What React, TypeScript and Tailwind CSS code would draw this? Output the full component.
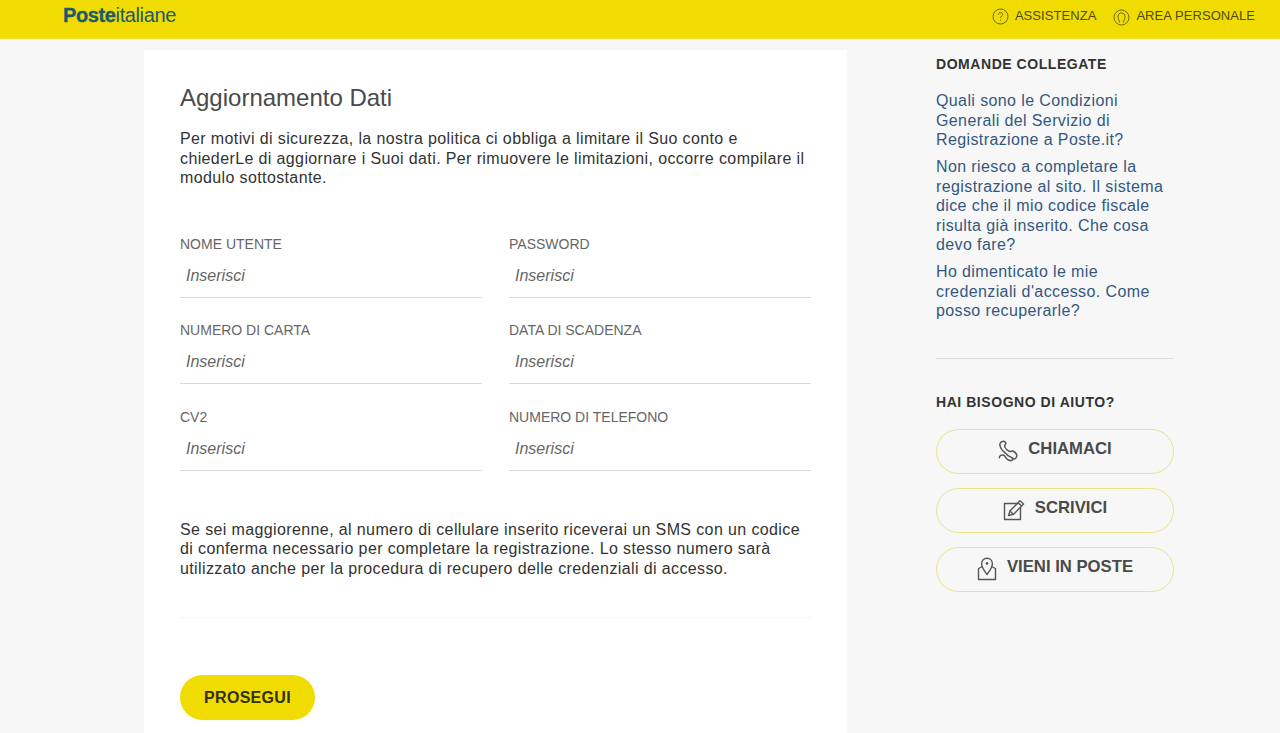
const FONT = "font-['Liberation_Sans',Arial,sans-serif]";

function Field({ label }: { label: string }) {
  return (
    <div className="h-[86.5px]">
      <div className="h-[18px] text-[14px] leading-[18px] text-[#666]">{label}</div>
      <div className="h-[45px] border-b border-[#d9d9d9] pl-[6px] pt-[13px] text-[16px] leading-[20px] italic text-[#666]">
        Inserisci
      </div>
    </div>
  );
}

// handset with a curled cord at the bottom left
function PhoneIcon() {
  return (
    <svg width="20" height="22" viewBox="0 0 20 22" fill="none" stroke="#555" strokeWidth="1.5" strokeLinejoin="round" strokeLinecap="round">
      <path d="M2 3.5 C3 1.5 5.5 0.8 6.8 1.6 L7.8 3 C8 4.2 6.5 5 6.6 6.2 C7 8 9.5 10.6 11.5 11.4 C12.8 11.8 13.6 10.6 14.8 11 C16.4 11.8 18.6 13.6 18.8 15.4 C18.9 17.5 16.8 19.6 15.6 18.8 C12 17.2 7.5 14 4.6 10.6 C3 8.6 1.5 5.5 2 3.5 Z" />
      <path d="M1.4 17.8 C1.4 15.6 3.6 14.4 5.6 15.2 C7.4 16 7.6 18 9.4 19.4 C11 20.6 13.4 20.8 14.6 19.8" />
    </svg>
  );
}

// square with a pencil leaning across the top right corner
function EditIcon() {
  return (
    <svg width="22" height="22" viewBox="0 0 22 22" fill="none" stroke="#555" strokeWidth="1.4" strokeLinejoin="round">
      <path d="M15.5 4.5 H1.5 V20.5 H17.5 V9" />
      <path d="M5.5 16.5 L7 12 L16.8 1.8 L20.6 5 L10.4 15.4 Z" />
      <path d="M7 12 L10.4 15.4 M15 3.8 L18.6 7.1" />
    </svg>
  );
}

// map pin standing in an open envelope shape
function PinIcon() {
  return (
    <svg width="20" height="24" viewBox="0 0 20 24" fill="none" stroke="#555" strokeWidth="1.4" strokeLinejoin="round">
      <path d="M5.4 9.5 L1.5 11.5 V22.5 H18.5 V11.5 L14.6 9.5" />
      <path d="M10 17.5 C7.4 14 4.6 10.6 4.6 6.8 C4.6 3.6 7 1.3 10 1.3 C13 1.3 15.4 3.6 15.4 6.8 C15.4 10.6 12.6 14 10 17.5 Z" />
      <circle cx="10" cy="6.4" r="1.3" fill="#555" stroke="none" />
    </svg>
  );
}

function HelpButton({ icon, label }: { icon: React.ReactNode; label: string }) {
  return (
    <button className="flex h-[45px] w-[238px] items-center justify-center gap-[10px] rounded-full border border-[#e9e48c] text-[16.7px] font-bold leading-none text-[#4a4a4a]">
      {icon}
      <span className="-mt-[3px]">{label}</span>
    </button>
  );
}

export default function App() {
  return (
    <div className={`${FONT} h-[733px] overflow-hidden bg-[#f7f7f7]`}>
      <header className="flex h-[39px] items-center justify-between border-b-2 border-[#f2dd1c] bg-[#f0dc00] pl-[63px] pr-[25px]">
        <div className="-mt-[8px] text-[20px] leading-none tracking-[-0.38px] text-[#1c5a6b]">
          <span className="font-bold [-webkit-text-stroke:0.3px_#1c5a6b]">Poste</span>italiane
        </div>
        <div className="-mt-[6px] flex items-center text-[13px] tracking-[0.06px] text-[#4f4a14]">
          <svg width="17" height="17" viewBox="0 0 17 17" fill="none" stroke="#6e6716" strokeWidth="1" className="mt-[2px]">
            <circle cx="8.5" cy="8.5" r="7.5" />
            <path d="M6.3 6.7 C6.3 5.3 7.3 4.6 8.5 4.6 C9.8 4.6 10.7 5.4 10.7 6.5 C10.7 8 8.5 8.1 8.5 10" />
            <path d="M8.5 11.6 V12.8" />
          </svg>
          <span className="ml-[6px]">ASSISTENZA</span>
          <svg width="17" height="17" viewBox="0 0 17 17" fill="none" stroke="#6e6716" strokeWidth="1" className="ml-[17px] mt-[3px]">
            <circle cx="8.5" cy="8.5" r="7.5" />
            <path d="M6.5 13.5 C6.5 11.5 5 10.5 5 7.5 C5 5.2 6.5 4 8.5 4 C10.5 4 12 5.2 12 7.5 C12 10.5 10.5 11.5 10.5 13.5" />
          </svg>
          <span className="ml-[6px]">AREA PERSONALE</span>
        </div>
      </header>

      <div className="flex pl-[144px] pt-[11px]">
        <main className="h-[700px] w-[703px] bg-white pl-[36px] pr-[36px] pt-[33px]">
          <h1 className="text-[24px] leading-[30px] text-[#4a4a4a]">Aggiornamento Dati</h1>
          <p className="mt-[16px] text-[16px] leading-[19.5px] tracking-[0.38px] text-[#333]">
            Per motivi di sicurezza, la nostra politica ci obbliga a limitare il Suo conto e
            <br />
            chiederLe di aggiornare i Suoi dati. Per rimuovere le limitazioni, occorre compilare il
            <br />
            modulo sottostante.
          </p>
          <div className="mt-[47px] grid grid-cols-[302px_302px] gap-x-[27px]">
            <Field label="NOME UTENTE" />
            <Field label="PASSWORD" />
            <Field label="NUMERO DI CARTA" />
            <Field label="DATA DI SCADENZA" />
            <Field label="CV2" />
            <Field label="NUMERO DI TELEFONO" />
          </div>
          <p className="mt-[25.5px] text-[16px] leading-[19.5px] tracking-[0.38px] text-[#333]">
            Se sei maggiorenne, al numero di cellulare inserito riceverai un SMS con un codice
            <br />
            di conferma necessario per completare la registrazione. Lo stesso numero sarà
            <br />
            utilizzato anche per la procedura di recupero delle credenziali di accesso.
          </p>
          <div className="mt-[39px] h-px bg-[#f5f5f5]" />
          <button className="mt-[57px] h-[45px] w-[135px] rounded-full bg-[#f0dc00] text-[16px] font-bold tracking-[0.3px] text-[#33300a]">
            PROSEGUI
          </button>
        </main>

        <aside className="ml-[89px] w-[238px] pt-[4px]">
          <h2 className="text-[14px] font-bold leading-[20px] tracking-[0.55px] text-[#333]">DOMANDE COLLEGATE</h2>
          <div className="mt-[17px] flex flex-col gap-[7.5px] text-[16px] leading-[19.5px] tracking-[0.39px] text-[#35577f]">
            <p>
              Quali sono le Condizioni
              <br />
              Generali del Servizio di
              <br />
              Registrazione a Poste.it?
            </p>
            <p>
              Non riesco a completare la
              <br />
              registrazione al sito. Il sistema
              <br />
              dice che il mio codice fiscale
              <br />
              risulta già inserito. Che cosa
              <br />
              devo fare?
            </p>
            <p>
              Ho dimenticato le mie
              <br />
              credenziali d'accesso. Come
              <br />
              posso recuperarle?
            </p>
          </div>
          <div className="mt-[37px] h-px bg-[#dcdcdc]" />
          <h2 className="mt-[33px] text-[14px] font-bold leading-[20px] tracking-[0.55px] text-[#333]">HAI BISOGNO DI AIUTO?</h2>
          <div className="mt-[17px] flex flex-col gap-[14px]">
            <HelpButton icon={<PhoneIcon />} label="CHIAMACI" />
            <HelpButton icon={<EditIcon />} label="SCRIVICI" />
            <HelpButton icon={<PinIcon />} label="VIENI IN POSTE" />
          </div>
        </aside>
      </div>
    </div>
  );
}
